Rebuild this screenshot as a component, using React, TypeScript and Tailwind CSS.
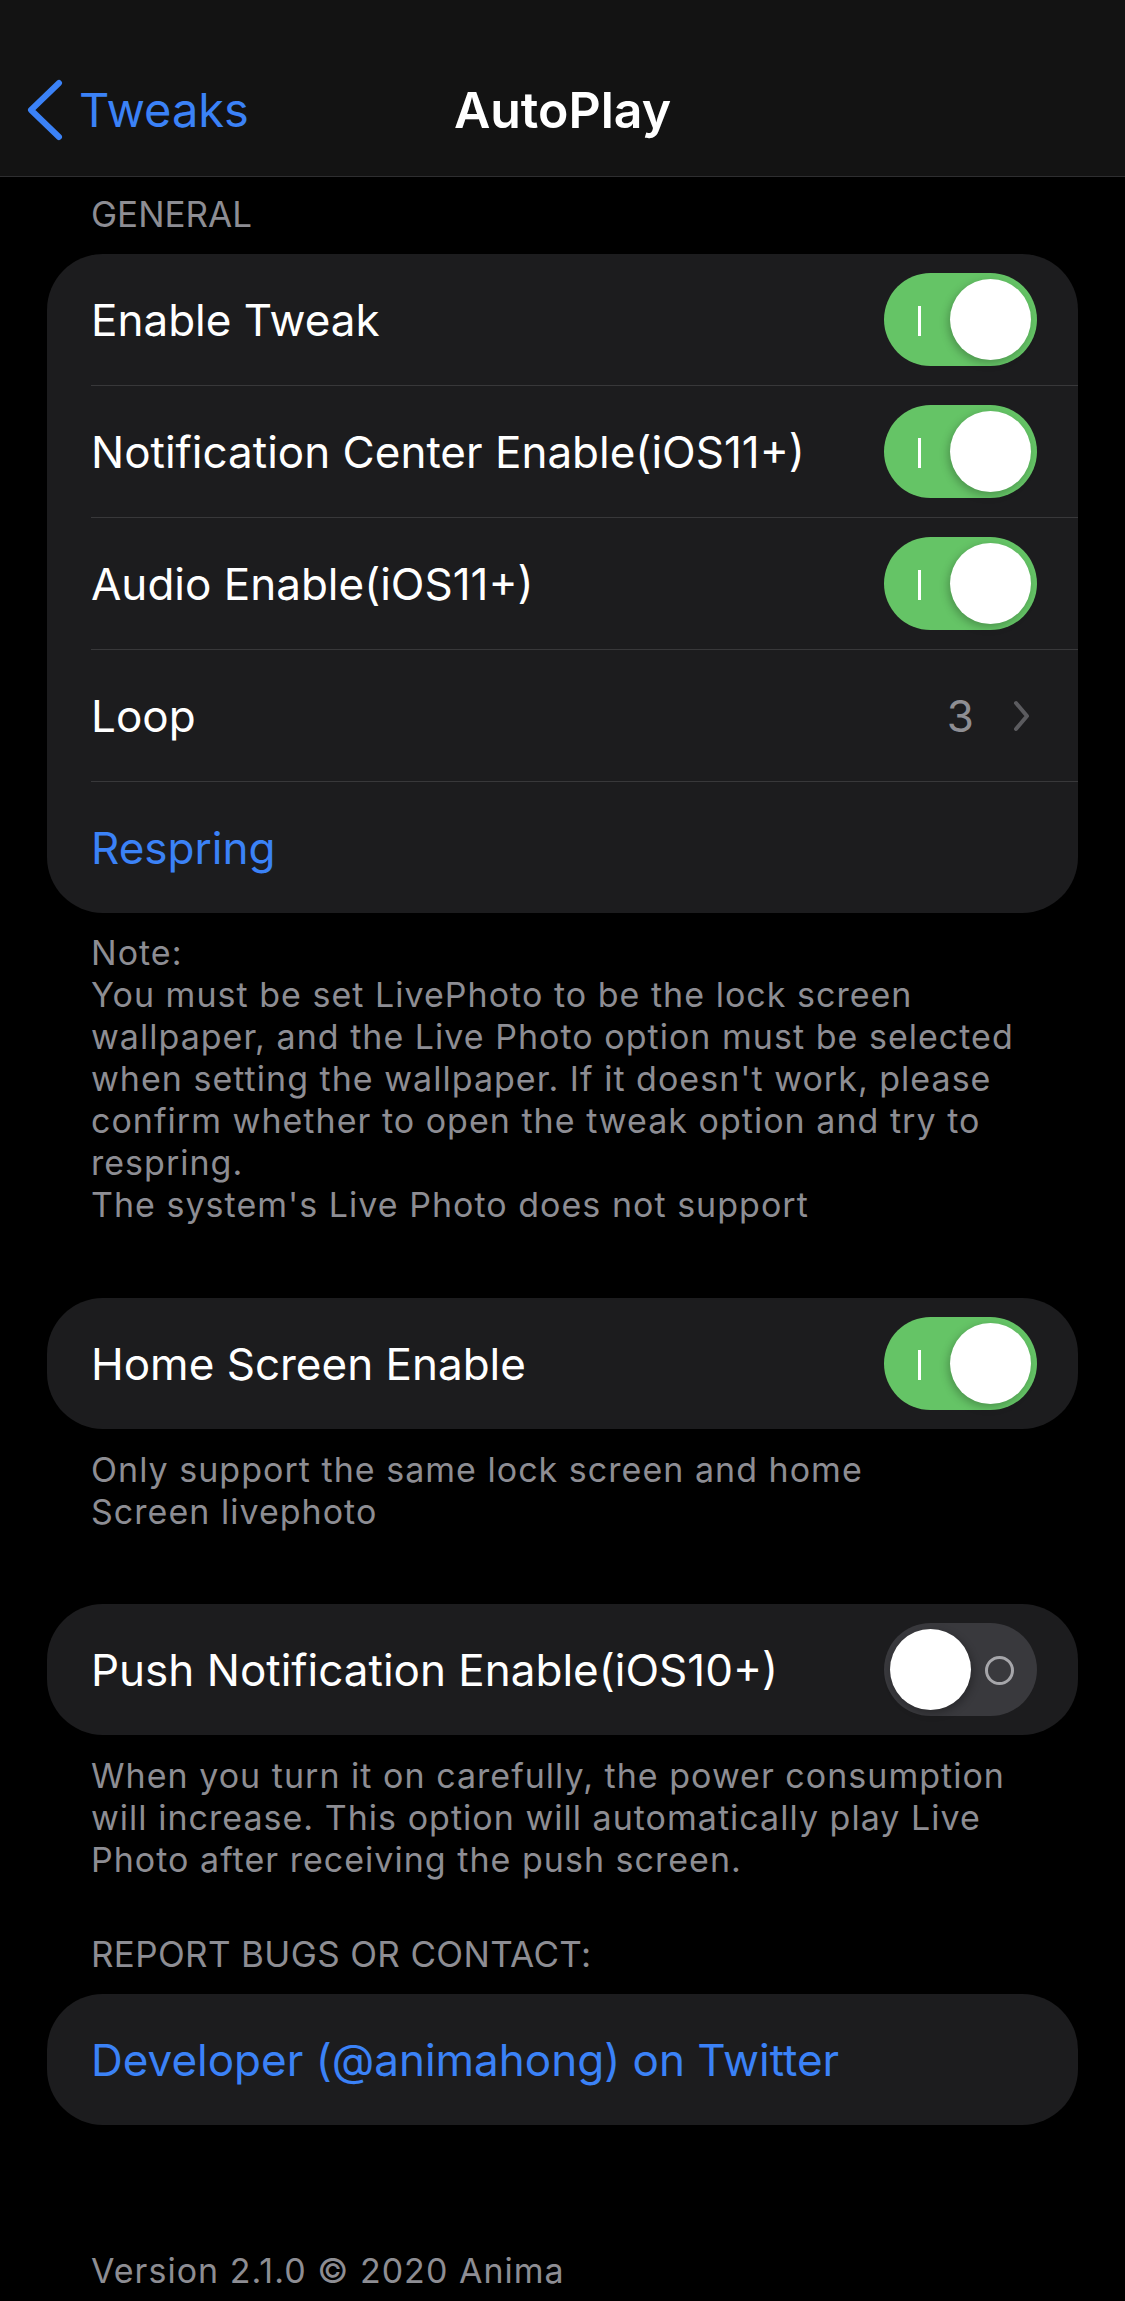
import React from "react";

const font = { fontFamily: "Inter, 'Noto Sans', sans-serif" };

function Toggle({ on }: { on: boolean }) {
  if (on) {
    return (
      <div className="relative w-[153px] h-[93px] shrink-0 rounded-full bg-[#65c466]">
        <div className="absolute left-[34px] top-[33px] w-[3px] h-[30px] bg-white" />
        <div className="absolute right-[6px] top-[6px] w-[81px] h-[81px] rounded-full bg-white shadow-[-2px_3px_8px_rgba(0,0,0,0.25)]" />
      </div>
    );
  }
  return (
    <div className="relative w-[153px] h-[93px] shrink-0 rounded-full bg-[#39393d]">
      <div className="absolute left-[101px] top-[33px] w-[29px] h-[29px] rounded-full border-[3px] border-[#a6a6aa]" />
      <div className="absolute left-[6px] top-[6px] w-[81px] h-[81px] rounded-full bg-white shadow-[2px_3px_8px_rgba(0,0,0,0.3)]" />
    </div>
  );
}

function Row({
  children,
  last,
}: {
  children: React.ReactNode;
  last?: boolean;
}) {
  return (
    <div className="pl-[44px]">
      <div
        className={
          last
            ? "h-[131px] flex items-center justify-between pr-[41px]"
            : "h-[132px] flex items-center justify-between pr-[41px] border-b border-[#38383a]"
        }
      >
        {children}
      </div>
    </div>
  );
}

function Footer({ lines }: { lines: string[] }) {
  return (
    <div className="pl-[44px] text-[34px] leading-[42px] tracking-[0.03em] text-[#8d8d93]">
      {lines.map((l, i) => (
        <div key={i} className="whitespace-nowrap">
          {l}
        </div>
      ))}
    </div>
  );
}

export default function App() {
  return (
    <main className="w-[1125px] min-h-[2301px] bg-black text-white" style={font}>
      {/* nav bar */}
      <div className="h-[177px] bg-[#131313] border-b border-[#2e2e30] flex items-end">
        <div className="h-[132px] w-full grid grid-cols-[1fr_auto_1fr] items-center">
          <div className="flex items-center pl-[27px] text-[#3b82f7]">
            <svg width="36" height="62" viewBox="0 0 36 62" fill="none">
              <path
                d="M32 4 L4 31 L32 58"
                stroke="#3b82f7"
                strokeWidth="6"
                strokeLinecap="round"
                strokeLinejoin="round"
              />
            </svg>
            <span className="ml-[16px] text-[47px]">Tweaks</span>
          </div>
          <div className="text-[50px] font-semibold">AutoPlay</div>
          <div />
        </div>
      </div>

      <div className="px-[47px]">
        <div className="mt-[16px] mb-[19px] pl-[44px] text-[35px] leading-[42px] text-[#8d8d93]">
          GENERAL
        </div>

        <div className="bg-[#1c1c1e] rounded-[56px] overflow-hidden">
          <Row>
            <span className="text-[44px]">Enable Tweak</span>
            <Toggle on />
          </Row>
          <Row>
            <span className="text-[44px]">Notification Center Enable(iOS11+)</span>
            <Toggle on />
          </Row>
          <Row>
            <span className="text-[44px]">Audio Enable(iOS11+)</span>
            <Toggle on />
          </Row>
          <Row>
            <span className="text-[44px]">Loop</span>
            <div className="flex items-center">
              <span className="text-[44px] text-[#8e8e93]">3</span>
              <svg className="ml-[39px] mr-[7px]" width="17" height="32" viewBox="0 0 17 32" fill="none">
                <path
                  d="M3 3 L14 16 L3 29"
                  stroke="#5b5b5f"
                  strokeWidth="4"
                  strokeLinecap="round"
                  strokeLinejoin="round"
                />
              </svg>
            </div>
          </Row>
          <Row last>
            <span className="text-[44px] text-[#3b82f7]">Respring</span>
          </Row>
        </div>

        <div className="mt-[19px]">
          <Footer
            lines={[
              "Note:",
              "You must be set LivePhoto to be the lock screen",
              "wallpaper, and the Live Photo option must be selected",
              "when setting the wallpaper. If it doesn't work, please",
              "confirm whether to open the tweak option and try to",
              "respring.",
              "The system's Live Photo does not support",
            ]}
          />
        </div>

        <div className="mt-[72px] bg-[#1c1c1e] rounded-[56px]">
          <Row last>
            <span className="text-[44px]">Home Screen Enable</span>
            <Toggle on />
          </Row>
        </div>
        <div className="mt-[20px]">
          <Footer lines={["Only support the same lock screen and home", "Screen livephoto"]} />
        </div>

        <div className="mt-[71px] bg-[#1c1c1e] rounded-[56px]">
          <Row last>
            <span className="text-[44px]">Push Notification Enable(iOS10+)</span>
            <Toggle on={false} />
          </Row>
        </div>
        <div className="mt-[20px]">
          <Footer
            lines={[
              "When you turn it on carefully, the power consumption",
              "will increase. This option will automatically play Live",
              "Photo after receiving the push screen.",
            ]}
          />
        </div>

        <div className="mt-[52px] mb-[19px] pl-[44px] text-[35px] leading-[42px] tracking-[0.01em] text-[#8d8d93]">
          REPORT BUGS OR CONTACT:
        </div>
        <div className="bg-[#1c1c1e] rounded-[56px]">
          <Row last>
            <span className="text-[44px] text-[#3b82f7]">Developer (@animahong) on Twitter</span>
          </Row>
        </div>

        <div className="mt-[125px] pb-[8px]">
          <Footer lines={["Version 2.1.0 © 2020 Anima"]} />
        </div>
      </div>
    </main>
  );
}
